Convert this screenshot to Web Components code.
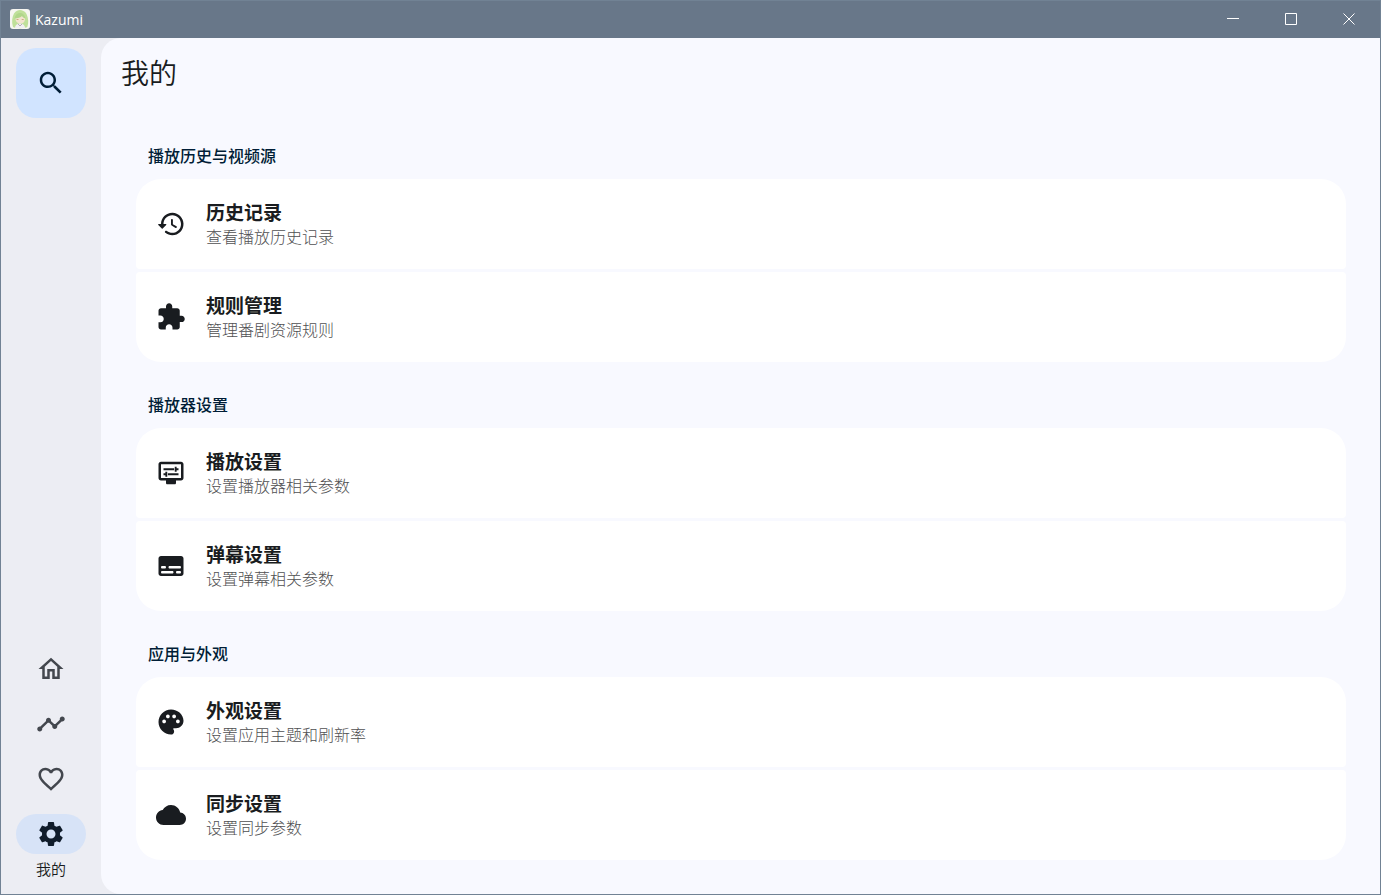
<!DOCTYPE html>
<html lang="zh-CN">
<head>
<meta charset="UTF-8">
<meta name="viewport" content="width=device-width, initial-scale=1">
<title>Kazumi</title>
<style>
    body{
        margin: 0;
        font-family: "Noto Sans", "Noto Sans CJK SC", sans-serif;
        color: #191c20;
    }
</style>
</head>
<body>
<app-window>
    <title-bar slot="bar" name="Kazumi"></title-bar>
    <side-nav slot="nav"></side-nav>
    <settings-page name="我的">
        <settings-group name="播放历史与视频源">
            <settings-item icon="history" name="历史记录" detail="查看播放历史记录"></settings-item>
            <settings-item icon="extension" name="规则管理" detail="管理番剧资源规则"></settings-item>
        </settings-group>
        <settings-group name="播放器设置">
            <settings-item icon="display" name="播放设置" detail="设置播放器相关参数"></settings-item>
            <settings-item icon="subtitles" name="弹幕设置" detail="设置弹幕相关参数"></settings-item>
        </settings-group>
        <settings-group name="应用与外观">
            <settings-item icon="palette" name="外观设置" detail="设置应用主题和刷新率"></settings-item>
            <settings-item icon="cloud" name="同步设置" detail="设置同步参数"></settings-item>
        </settings-group>
    </settings-page>
</app-window>
<script>
const icons={
    search:'M15.5 14h-.79l-.28-.27C15.41 12.59 16 11.11 16 9.5 16 5.91 13.09 3 9.5 3S3 5.91 3 9.5 5.91 16 9.5 16c1.61 0 3.09-.59 4.23-1.57l.27.28v.79l5 4.99L20.49 19l-4.99-5zm-6 0C7.01 14 5 11.99 5 9.5S7.01 5 9.5 5 14 7.01 14 9.5 11.99 14 9.5 14z',
    home:'M12 5.69l5 4.5V18h-2v-6H9v6H7v-7.81l5-4.5M12 3L2 12h3v8h6v-6h2v6h6v-8h3L12 3z',
    timeline:'M23 8c0 1.1-.9 2-2 2-.18 0-.35-.02-.51-.07l-3.56 3.55c.05.16.07.34.07.52 0 1.1-.9 2-2 2s-2-.9-2-2c0-.18.02-.36.07-.52l-2.55-2.55c-.16.05-.34.07-.52.07s-.36-.02-.52-.07l-4.55 4.56c.05.16.07.33.07.51 0 1.1-.9 2-2 2s-2-.9-2-2 .9-2 2-2c.18 0 .35.02.51.07l4.56-4.55C8.02 9.36 8 9.18 8 9c0-1.1.9-2 2-2s2 .9 2 2c0 .18-.02.36-.07.52l2.55 2.55c.16-.05.34-.07.52-.07s.36.02.52.07l3.55-3.56C19.02 8.35 19 8.18 19 8c0-1.1.9-2 2-2s2 .9 2 2z',
    favorite:'M16.5 3c-1.74 0-3.41.81-4.5 2.09C10.91 3.81 9.24 3 7.5 3 4.42 3 2 5.42 2 8.5c0 3.78 3.4 6.86 8.55 11.54L12 21.35l1.45-1.32C18.6 15.36 22 12.28 22 8.5 22 5.42 19.58 3 16.5 3zm-4.4 15.55l-.1.1-.1-.1C7.14 14.24 4 11.39 4 8.5 4 6.5 5.5 5 7.5 5c1.54 0 3.04.99 3.57 2.36h1.87C13.46 5.99 14.96 5 16.5 5c2 0 3.5 1.5 3.5 3.5 0 2.89-3.14 5.74-7.9 10.05z',
    settings:'M19.14 12.94c.04-.3.06-.61.06-.94 0-.32-.02-.64-.07-.94l2.03-1.58c.18-.14.23-.41.12-.61l-1.92-3.32c-.12-.22-.37-.29-.59-.22l-2.39.96c-.5-.38-1.03-.7-1.62-.94l-.36-2.54c-.04-.24-.24-.41-.48-.41h-3.84c-.24 0-.43.17-.47.41l-.36 2.54c-.59.24-1.13.57-1.62.94l-2.39-.96c-.22-.08-.47 0-.59.22L2.74 8.87c-.12.21-.08.47.12.61l2.03 1.58c-.05.3-.09.63-.09.94s.02.64.07.94l-2.03 1.58c-.18.14-.23.41-.12.61l1.92 3.32c.12.22.37.29.59.22l2.39-.96c.5.38 1.03.7 1.62.94l.36 2.54c.05.24.24.41.48.41h3.84c.24 0 .44-.17.47-.41l.36-2.54c.59-.24 1.13-.56 1.62-.94l2.39.96c.22.08.47 0 .59-.22l1.92-3.32c.12-.22.07-.47-.12-.61l-2.01-1.58zM12 15.6c-1.98 0-3.6-1.62-3.6-3.6s1.62-3.6 3.6-3.6 3.6 1.62 3.6 3.6-1.62 3.6-3.6 3.6z',
    history:'M13.26 3C8.17 2.86 4 6.95 4 12H2.21c-.45 0-.67.54-.35.85l2.79 2.8c.2.2.51.2.71 0l2.79-2.8c.31-.31.09-.85-.36-.85H6c0-3.9 3.18-7.05 7.1-7 3.72.05 6.85 3.18 6.9 6.9.05 3.91-3.1 7.1-7 7.1-1.61 0-3.1-.55-4.28-1.48-.4-.31-.96-.28-1.32.08-.42.42-.39 1.13.08 1.49C9 20.29 10.91 21 13 21c5.05 0 9.14-4.17 9-9.26-.13-4.69-4.05-8.61-8.74-8.74zm-.51 5c-.41 0-.75.34-.75.75v3.68c0 .35.19.68.49.86l3.12 1.85c.36.21.82.09 1.03-.26.21-.36.09-.82-.26-1.03l-2.88-1.71v-3.4c0-.4-.34-.74-.75-.74z',
    extension:'M20.5 11H19V7c0-1.1-.9-2-2-2h-4V3.5C13 2.12 11.88 1 10.5 1S8 2.12 8 3.5V5H4c-1.1 0-1.99.9-1.99 2v3.8H3.5c1.49 0 2.7 1.21 2.7 2.7s-1.21 2.7-2.7 2.7H2V20c0 1.1.9 2 2 2h3.8v-1.5c0-1.49 1.21-2.7 2.7-2.7 1.49 0 2.7 1.21 2.7 2.7V22H17c1.1 0 2-.9 2-2v-4h1.5c1.38 0 2.5-1.12 2.5-2.5S21.88 11 20.5 11z',
    display:'M20 3H4c-1.1 0-2 .9-2 2v11c0 1.1.9 2 2 2h4v2c0 .55.45 1 1 1h6c.55 0 1-.45 1-1v-2h4c1.1 0 2-.9 2-2V5c0-1.1-.9-2-2-2zm0 13H4V5h16v11zM6 8.25h8.5v1.5H6zM16.5 9.75H18v-1.5h-1.5V7H15v4h1.5zM9.5 12.25H18v1.5H9.500zM7.5 13.75V15H9v-4H7.5v1.25H6v1.5z',
    subtitles:'M20 4H4c-1.1 0-2 .9-2 2v12c0 1.1.9 2 2 2h16c1.1 0 2-.9 2-2V6c0-1.1-.9-2-2-2zM5 12h2c.55 0 1 .45 1 1s-.45 1-1 1H5c-.55 0-1-.45-1-1s.45-1 1-1zm8 6H5c-.55 0-1-.45-1-1s.45-1 1-1h8c.55 0 1 .45 1 1s-.45 1-1 1zm6 0h-2c-.55 0-1-.45-1-1s.45-1 1-1h2c.55 0 1 .45 1 1s-.45 1-1 1zm0-4h-8c-.55 0-1-.45-1-1s.45-1 1-1h8c.55 0 1 .45 1 1s-.45 1-1 1z',
    palette:'M12 2C6.49 2 2 6.49 2 12s4.49 10 10 10c1.38 0 2.5-1.12 2.5-2.5 0-.61-.23-1.2-.64-1.67-.08-.1-.13-.21-.13-.33 0-.28.22-.5.5-.5H16c3.31 0 6-2.69 6-6 0-4.96-4.49-9-10-9zm5.5 11c-.83 0-1.5-.67-1.5-1.5s.67-1.5 1.5-1.5 1.5.67 1.5 1.5-.67 1.5-1.5 1.5zm-3-4c-.83 0-1.5-.67-1.5-1.5S13.67 6 14.5 6s1.5.67 1.5 1.5S15.33 9 14.5 9zM5 11.5c0-.83.67-1.5 1.5-1.5s1.5.67 1.5 1.5S7.33 13 6.5 13 5 12.33 5 11.5zm6-4c0 .83-.67 1.5-1.5 1.5S8 8.33 8 7.5 8.67 6 9.5 6s1.5.67 1.5 1.5z',
    cloud:'M19.35 10.04C18.67 6.59 15.64 4 12 4 9.11 4 6.6 5.64 5.35 8.04 2.34 8.36 0 10.91 0 14c0 3.31 2.69 6 6 6h13c2.76 0 5-2.24 5-5 0-2.64-2.05-4.78-4.65-4.96z'
}

class MdIcon extends HTMLElement{
    constructor(){
        super()
        this._shadowRoot = this.attachShadow({mode:'open'})
    }
    connectedCallback(){
        this._shadowRoot.innerHTML=`
        <style>
            :host{
                display: block;
                flex: none;
                width: 30px;
                height: 30px;
            }
            svg{
                display: block;
                width: 100%;
                height: 100%;
                fill: currentColor;
            }
        </style>
        <svg viewBox="0 0 24 24" aria-hidden="true"><path d="${icons[this.getAttribute('name')]}"/></svg>
        `
    }
}

class AppWindow extends HTMLElement{
    constructor(){
        super()
        this._shadowRoot = this.attachShadow({mode:'open'})
    }
    connectedCallback(){
        this._shadowRoot.innerHTML=`
        <style>
            :host{
                display: flex;
                flex-direction: column;
                box-sizing: border-box;
                min-height: 100vh;
                border: 1px solid #718294;
                background: #ecedf3;
            }
            .body{
                flex: 1;
                display: flex;
            }
            main{
                flex: 1;
                min-width: 0;
                background: #f8f9ff;
                border-radius: 20px 0 0 20px;
            }
        </style>
        <slot name="bar"></slot>
        <div class="body">
            <slot name="nav"></slot>
            <main><slot></slot></main>
        </div>
        `
    }
}

class TitleBar extends HTMLElement{
    constructor(){
        super()
        this._shadowRoot = this.attachShadow({mode:'open'})
    }
    connectedCallback(){
        this._shadowRoot.innerHTML=`
        <style>
            :host{
                display: flex;
                align-items: center;
                height: 36px;
                padding: 0 2px 1px 9px;
                background: #687789;
                color: #fff;
                font-family: "Open Sans", "Noto Sans", sans-serif;
                font-size: 14px;
            }
            .logo{
                width: 20px;
                height: 20px;
                margin-right: 5px;
            }
            .name{
                flex: 1;
            }
            button{
                width: 58px;
                height: 36px;
                padding: 0;
                border: 0;
                background: none;
                color: inherit;
            }
            button svg{
                display: block;
                width: 12px;
                height: 12px;
                margin: 0 auto;
                fill: none;
                stroke: currentColor;
            }
        </style>
        <svg class="logo" viewBox="0 0 20 20" aria-hidden="true">
            <rect width="20" height="20" rx="3" fill="#f6f6f1"/>
            <path d="M3 18C1.500 13 2 8 4 4.500 6 1.500 8 1 10 1s5 1 6.500 4c2 4 2.300 9 .8 13-1.500 1.500-12.500 1.500-14.300 0z" fill="#bfe09a"/>
            <path d="M5.500 9.500C6 7 8 6 10.500 6s4 1.500 4.500 4c0 3-2 4.500-4.700 4.500S5.500 13 5.500 9.500z" fill="#f3e4cf"/>
            <path d="M4.500 9.500c1-4 3-5.500 5.500-5.500s5 2 5.500 5.500c-2-.5-3-1.500-3.500-2.500-1 1.500-4.500 2.500-7.500 2.500z" fill="#b0d68a"/>
            <path d="M6.500 10.500h2M11.700 10.500h2" stroke="#c9ae84" stroke-width="1"/>
            <path d="M5 19c0-3 2-4.500 5-4.500s5 1.500 5 4.500z" fill="#f1eff2"/>
            <path d="M8 15l2 2 2-2" fill="none" stroke="#b4adb6" stroke-width="1"/>
        </svg>
        <span class="name">${this.getAttribute('name')}</span>
        <button type="button" aria-label="最小化"><svg viewBox="0 0 12 12"><path d="M0 5.500h12"/></svg></button>
        <button type="button" aria-label="最大化"><svg viewBox="0 0 12 12"><path d="M.5.5h11v11H.5z"/></svg></button>
        <button type="button" aria-label="关闭"><svg viewBox="0 0 12 12"><path d="M.5.5l11 11M11.500.5l-11 11"/></svg></button>
        `
    }
}

class SideNav extends HTMLElement{
    constructor(){
        super()
        this._shadowRoot = this.attachShadow({mode:'open'})
    }
    connectedCallback(){
        this._shadowRoot.innerHTML=`
        <style>
            :host{
                display: flex;
                flex-direction: column;
                justify-content: space-between;
                padding: 10px 15px 15px;
            }
            button{
                display: block;
                padding: 0;
                border: 0;
                background: none;
                font: inherit;
                color: #43474e;
            }
            md-icon{
                margin: 0 auto;
            }
            .search{
                width: 70px;
                height: 70px;
                border-radius: 20px;
                background: #d1e4ff;
                color: #001d36;
            }
            nav{
                display: flex;
                flex-direction: column;
                gap: 15px;
            }
            nav button{
                width: 70px;
            }
            .pill{
                display: flex;
                align-items: center;
                height: 40px;
                border-radius: 20px;
            }
            .active{
                color: #191c20;
            }
            .active .pill{
                background: #d7e3f7;
                color: #101c2b;
            }
            .label{
                display: block;
                margin-top: 5px;
                line-height: 20px;
                font-size: 15px;
                font-weight: 350;
            }
        </style>
        <button class="search" type="button" aria-label="搜索"><md-icon name="search"></md-icon></button>
        <nav>
            <button type="button" aria-label="推荐"><span class="pill"><md-icon name="home"></md-icon></span></button>
            <button type="button" aria-label="时间表"><span class="pill"><md-icon name="timeline"></md-icon></span></button>
            <button type="button" aria-label="追番"><span class="pill"><md-icon name="favorite"></md-icon></span></button>
            <button class="active" type="button" aria-current="page">
                <span class="pill"><md-icon name="settings"></md-icon></span>
                <span class="label">我的</span>
            </button>
        </nav>
        `
    }
}

class SettingsPage extends HTMLElement{
    constructor(){
        super()
        this._shadowRoot = this.attachShadow({mode:'open'})
    }
    connectedCallback(){
        this._shadowRoot.innerHTML=`
        <style>
            :host{
                display: block;
            }
            h1{
                margin: 0;
                padding: 15px 20px;
                line-height: 40px;
                font-size: 28px;
                font-weight: 350;
            }
            .groups{
                display: flex;
                flex-direction: column;
                gap: 30px;
                padding: 35px 34px 34px 35px;
            }
        </style>
        <h1>${this.getAttribute('name')}</h1>
        <div class="groups"><slot></slot></div>
        `
    }
}

class SettingsGroup extends HTMLElement{
    constructor(){
        super()
        this._shadowRoot = this.attachShadow({mode:'open'})
    }
    connectedCallback(){
        this._shadowRoot.innerHTML=`
        <style>
            :host{
                display: block;
            }
            h2{
                margin: 0 12px 10px;
                line-height: 26px;
                font-size: 16px;
                font-weight: 500;
                color: #001d36;
            }
            .list{
                display: flex;
                flex-direction: column;
                gap: 3px;
                border-radius: 25px;
                overflow: hidden;
            }
        </style>
        <h2>${this.getAttribute('name')}</h2>
        <div class="list"><slot></slot></div>
        `
    }
}

class SettingsItem extends HTMLElement{
    constructor(){
        super()
        this._shadowRoot = this.attachShadow({mode:'open'})
    }
    connectedCallback(){
        this._shadowRoot.innerHTML=`
        <style>
            :host{
                display: block;
            }
            button{
                display: flex;
                align-items: center;
                gap: 20px;
                width: 100%;
                min-height: 90px;
                padding: 0 20px;
                border: 0;
                border-radius: 4px;
                background: #fff;
                color: #191c20;
                font: inherit;
                text-align: left;
            }
            .text{
                padding-top: 2px;
            }
            .name{
                display: block;
                line-height: 25px;
                font-size: 19px;
                font-weight: 700;
            }
            .detail{
                display: block;
                line-height: 23px;
                font-size: 16px;
                font-weight: 300;
                color: #505052;
            }
        </style>
        <button type="button">
            <md-icon name="${this.getAttribute('icon')}"></md-icon>
            <span class="text">
                <span class="name">${this.getAttribute('name')}</span>
                <span class="detail">${this.getAttribute('detail')}</span>
            </span>
        </button>
        `
    }
}

window.customElements.define('md-icon',MdIcon)
window.customElements.define('app-window',AppWindow)
window.customElements.define('title-bar',TitleBar)
window.customElements.define('side-nav',SideNav)
window.customElements.define('settings-page',SettingsPage)
window.customElements.define('settings-group',SettingsGroup)
window.customElements.define('settings-item',SettingsItem)
</script>
</body>
</html>
